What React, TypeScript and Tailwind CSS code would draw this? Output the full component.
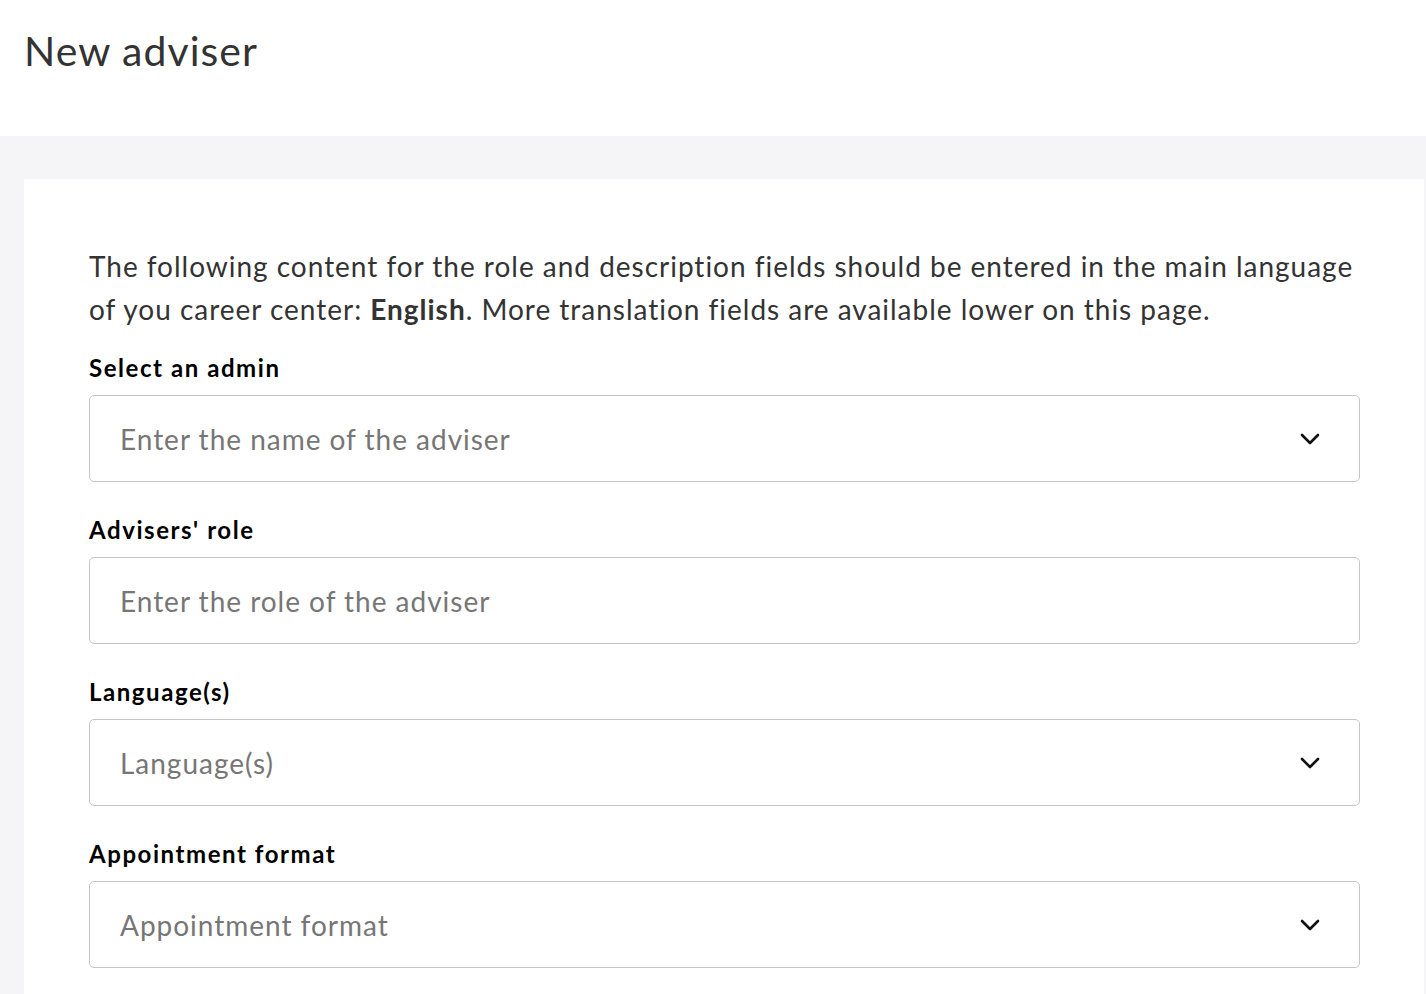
import React from "react";

const Chevron = () => (
  <svg width="20" height="12" viewBox="0 0 20 12" fill="none" className="shrink-0">
    <path d="M2 2l8 8 8-8" stroke="#111" strokeWidth="2.6" strokeLinecap="round" strokeLinejoin="round" />
  </svg>
);

function Field({ label, placeholder, select }: { label: string; placeholder: string; select?: boolean }) {
  return (
    <div className="flex flex-col">
      <div className="text-[24px] leading-[27px] font-bold text-black mb-[14px] tracking-[0.065em]">{label}</div>
      <div className="h-[87px] border border-[#c6c6c6] rounded-[5px] flex items-center justify-between pl-[30px] pr-[39px] bg-white">
        <span className="text-[28px] text-[#767676] tracking-[0.035em]">{placeholder}</span>
        {select && <Chevron />}
      </div>
    </div>
  );
}

export default function App() {
  return (
    <div className="min-h-[994px] bg-[#f5f5f7]" style={{ fontFamily: "Lato, 'Open Sans', sans-serif" }}>
      <div className="bg-white h-[136px] px-[24px] pt-[26px]">
        <h1 className="text-[41px] leading-[50px] text-[#333] tracking-[0.025em]">New adviser</h1>
      </div>
      <div className="pt-[43px] pl-[24px]">
        <div className="bg-white w-[1400px] pl-[65px] pr-[64px] pt-[66px] pb-[40px]">
          <p className="text-[28px] leading-[43px] text-[#333] mb-[23px] tracking-[0.035em]">
            The following content for the role and description fields should be entered in the main language of you career center: <b className="font-bold">English</b>. More translation fields are available lower on this page.
          </p>
          <div className="flex flex-col gap-[34px]">
            <Field label="Select an admin" placeholder="Enter the name of the adviser" select />
            <Field label="Advisers' role" placeholder="Enter the role of the adviser" />
            <Field label="Language(s)" placeholder="Language(s)" select />
            <Field label="Appointment format" placeholder="Appointment format" select />
          </div>
        </div>
      </div>
    </div>
  );
}
